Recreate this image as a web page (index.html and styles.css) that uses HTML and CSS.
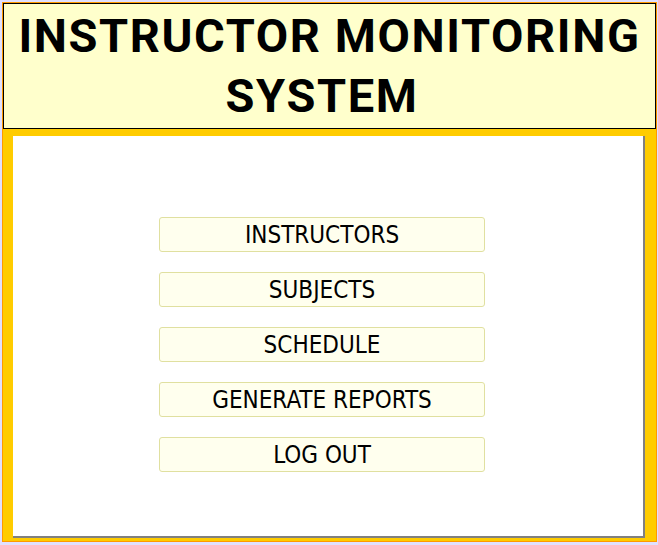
FILE: index.html
```html
<!DOCTYPE html>
<html>
<head>
<meta charset="utf-8">
<link rel="stylesheet" href="styles.css">
</head>
<body>
<div class="frame">
  <div class="header">
    <h1 class="title"><span class="line">INSTRUCTOR MONITORING</span><span class="line line2">SYSTEM</span></h1>
  </div>
  <div class="panel">
    <nav class="menu">
      <button class="btn">INSTRUCTORS</button>
      <button class="btn">SUBJECTS</button>
      <button class="btn">SCHEDULE</button>
      <button class="btn">GENERATE REPORTS</button>
      <button class="btn">LOG OUT</button>
    </nav>
  </div>
</div>
</body>
</html>
```

FILE: styles.css
```css
html, body {
  margin: 0;
  padding: 0;
}
body {
  background: #e0e0ff;
  width: 658px;
  height: 545px;
  overflow: hidden;
  font-family: "DejaVu Sans Condensed", "DejaVu Sans", sans-serif;
}
.frame {
  margin: 2px 0 0 2px;
  width: 653px;
  height: 538px;
  border: 1px solid #ff9900;
  background: #ffcc00;
}
.header {
  width: 651px;
  height: 122px;
  border: 1px solid #000;
  background: #ffffcc;
  padding-top: 2px;
}
.title {
  margin: 0;
  text-align: center;
  font-family: Roboto, "DejaVu Sans Condensed", sans-serif;
  font-weight: bold;
  font-size: 47px;
  line-height: 60px;
  letter-spacing: 1.6px;
  white-space: nowrap;
  color: #000;
}
.line {
  display: block;
}
.line2 {
  padding-right: 15px;
}
.panel {
  margin: 7px 0 0 10px;
  width: 630px;
  height: 400px;
  background: #fff;
  border-right: 2px solid #808080;
  border-bottom: 2px solid #808080;
}
.menu {
  display: flex;
  flex-direction: column;
  gap: 20px;
  padding: 81px 0 0 146px;
}
.btn {
  width: 326px;
  height: 35px;
  margin: 0;
  padding: 2px 0 0;
  border: 1px solid #e0e0a0;
  border-radius: 3px;
  background: #ffffee;
  font-family: "DejaVu Sans Condensed", "DejaVu Sans", sans-serif;
  font-size: 24px;
  color: #000;
  text-align: center;
  line-height: 31px;
}
```
